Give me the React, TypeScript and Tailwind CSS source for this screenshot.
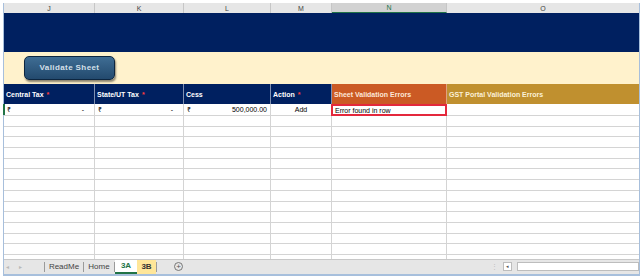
import React from "react";

const cols = ["J", "K", "L", "M", "N", "O"];
const grid = "grid grid-cols-[91px_89px_87px_61px_115px_192px]";

function Star() {
  return <span className="text-[#ff3b3b] ml-[3px]">*</span>;
}

export default function App() {
  const emptyRows = Array.from({ length: 13 });
  return (
    <div
      className="w-[643px] h-[277px] bg-white pt-[3px] pl-[3px] overflow-hidden"
      style={{ fontFamily: '"Liberation Sans", Arial, sans-serif' }}
    >
      <div className="w-[637px] border-x border-b-2 border-[#a7bfdc] bg-white">
        {/* column letters */}
        <div className={`${grid} h-[10px] bg-[#e6e6e6]`}>
          {cols.map((c) => (
            <div
              key={c}
              className={`flex items-center justify-center text-[7px] leading-none text-[#444] border-r border-[#c6c6c6] ${
                c === "N" ? "bg-[#d2d2d2] border-b-[1.5px] border-b-[#217346] text-[#217346]" : ""
              } ${c === "O" ? "border-r-0" : ""}`}
            >
              {c}
            </div>
          ))}
        </div>
        {/* navy band */}
        <div className="h-[39px] bg-[#002060]" />
        {/* cream band */}
        <div className="h-[32px] bg-[#fff2cc] flex items-center pl-[20px]">
          <div className="w-[91px] h-[24px] rounded-[5px] border border-[#0d2640] bg-gradient-to-b from-[#3f6d94] to-[#234a6e] shadow-[1px_2px_2px_rgba(0,0,0,0.45)] flex items-center justify-center">
            <span className="text-[8px] font-bold text-[#d6e0ea] tracking-[0.4px]">
              Validate Sheet
            </span>
          </div>
        </div>
        {/* header row */}
        <div className={`${grid} h-[20px] text-[7px] font-bold text-white leading-none`}>
          <div className="bg-[#002060] border-r border-[#7f8fb0] flex items-center pl-[2px]">
            Central Tax<Star />
          </div>
          <div className="bg-[#002060] border-r border-[#7f8fb0] flex items-center pl-[2px]">
            State/UT Tax<Star />
          </div>
          <div className="bg-[#002060] border-r border-[#7f8fb0] flex items-center pl-[2px]">
            Cess
          </div>
          <div className="bg-[#002060] border-r border-[#7f8fb0] flex items-center pl-[2px]">
            Action<Star />
          </div>
          <div className="bg-[#cb5a24] border-r border-[#e0a080] flex items-center pl-[2px] text-[#fde7d8]">
            Sheet Validation Errors
          </div>
          <div className="bg-[#c0902f] flex items-center pl-[2px] text-[#fbf0d8]">
            GST Portal Validation Errors
          </div>
        </div>
        {/* data row */}
        <div className={`${grid} h-[12px] text-[7px] leading-none text-black`}>
          <div className="border-r border-b border-[#d4d4d4] flex items-center justify-between pl-[3px] pr-[10px] relative">
            <span className="absolute left-[-1px] top-0 bottom-0 w-[1.5px] bg-[#217346]" />
            <span>₹</span>
            <span>-</span>
          </div>
          <div className="border-r border-b border-[#d4d4d4] flex items-center justify-between pl-[3px] pr-[10px]">
            <span>₹</span>
            <span>-</span>
          </div>
          <div className="border-r border-b border-[#d4d4d4] flex items-center justify-between pl-[3px] pr-[3px]">
            <span>₹</span>
            <span>500,000.00</span>
          </div>
          <div className="border-r border-b border-[#d4d4d4] flex items-center justify-center">
            Add
          </div>
          <div className="border-2 border-[#e4283c] flex items-center pl-[2px] -ml-[1px]">
            Error found in row
          </div>
          <div className="border-b border-[#d4d4d4]" />
        </div>
        {/* empty rows */}
        {emptyRows.map((_, i) => (
          <div key={i} className={`${grid} h-[10.7px]`}>
            {cols.map((c) => (
              <div
                key={c}
                className={`border-b border-[#d4d4d4] ${c === "O" ? "" : "border-r"}`}
              />
            ))}
          </div>
        ))}
        <div className={`${grid} h-[4px]`}>
          {cols.map((c) => (
            <div key={c} className={`${c === "O" ? "" : "border-r border-[#d4d4d4]"}`} />
          ))}
        </div>
        {/* tab bar */}
        <div className="h-[15px] bg-[#e6e6e6] border-t border-[#c8c8c8] flex items-center text-[8px] leading-none text-[#444]">
          <div className="w-[40px] flex items-center pl-[2px] text-[6px] text-[#b8b8b8]">
            <span>◂</span>
            <span className="ml-[10px]">▸</span>
          </div>
          <span className="w-px h-[10px] bg-[#9a9a9a]" />
          <div className="w-[38px] text-center">ReadMe</div>
          <span className="w-px h-[10px] bg-[#9a9a9a]" />
          <div className="w-[30px] text-center">Home</div>
          <span className="w-px h-[10px] bg-[#9a9a9a]" />
          <div className="h-[14px] w-[22px] bg-white flex items-center justify-center border-b-2 border-[#217346] font-bold text-[#217346]">
            3A
          </div>
          <div className="h-[14px] w-[19px] bg-[#ffe699] flex items-center justify-center font-bold text-[#333]">
            3B
          </div>
          <span className="w-px h-[10px] bg-[#9a9a9a]" />
          <span className="ml-[17px] w-[9px] h-[9px] rounded-full border border-[#777] flex items-center justify-center text-[8px] text-[#555]">
            +
          </span>
          <span className="ml-auto text-[7px] text-[#c0c0c0]">⋮</span>
          <div className="ml-[5px] w-[9px] h-[9px] bg-white border border-[#bdbdbd] flex items-center justify-center text-[5px] text-[#555]">
            ◂
          </div>
          <div className="ml-[5px] w-[122px] h-[9px] bg-white border border-[#bdbdbd]" />
        </div>
      </div>
    </div>
  );
}
